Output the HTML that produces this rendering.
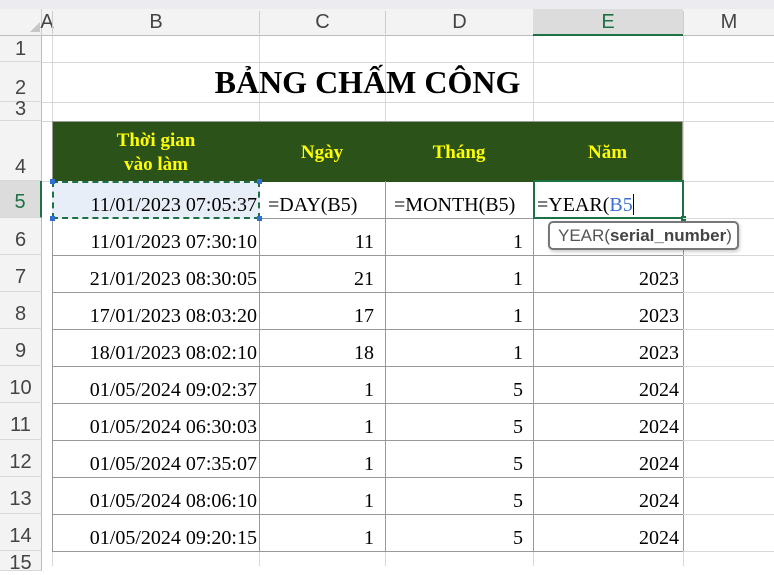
<!DOCTYPE html><html><head><style>
body{margin:0;width:774px;height:566px;overflow:hidden;background:#fff;position:relative;font-family:"Liberation Serif",serif}
div{position:absolute;box-sizing:border-box}
.h{font-family:"Liberation Sans",sans-serif;color:#444;font-size:20px;text-align:center}
.rh{left:0;width:42px;background:#f3f3f3;border-right:1px solid #bbb;border-bottom:1px solid #d8d8d8}
.vl{width:1px;background:#d8d8d8}
.hl{height:1px;background:#d8d8d8}
.t{font-size:20px;color:#000;white-space:nowrap}
.g{background:#2a5219;color:#ffff00;font-weight:bold;font-size:19px;text-align:center;border-right:1px solid #999}
</style></head><body>
<div style="left:0;top:0;width:774px;height:9px;background:#ecebf0"></div>
<div style="left:0;top:9px;width:774px;height:27px;background:#f3f3f3;border-bottom:1px solid #bbb"></div>
<div style="left:0;top:9px;width:42px;height:27px;border-right:1px solid #ccc"></div>
<div style="left:30px;top:22px;width:0;height:0;border-left:10px solid transparent;border-bottom:10px solid #c6c6c6"></div>
<div class="h" style="left:40px;top:11px;width:14px">A</div>
<div class="h" style="left:52px;top:11px;width:207px;border-left:1px solid #ccc">B</div>
<div class="h" style="left:259px;top:11px;width:126px;border-left:1px solid #ccc">C</div>
<div class="h" style="left:385px;top:11px;width:148px;border-left:1px solid #ccc">D</div>
<div style="left:533px;top:9px;width:150px;height:27px;background:#dcdcdc;border-bottom:2px solid #1e7145"></div>
<div class="h" style="left:533px;top:11px;width:150px;color:#1e7145">E</div>
<div class="h" style="left:683px;top:11px;width:91px;border-left:1px solid #ccc">M</div>
<div class="vl" style="left:52px;top:36px;height:530px"></div>
<div class="vl" style="left:259px;top:36px;height:530px"></div>
<div class="vl" style="left:385px;top:36px;height:530px"></div>
<div class="vl" style="left:533px;top:36px;height:530px"></div>
<div class="vl" style="left:683px;top:36px;height:530px"></div>
<div class="hl" style="left:42px;top:62px;width:732px"></div>
<div class="hl" style="left:42px;top:102px;width:732px"></div>
<div class="hl" style="left:42px;top:121px;width:732px"></div>
<div class="hl" style="left:42px;top:181px;width:732px"></div>
<div class="rh h" style="top:36px;height:26px;line-height:26px">1</div>
<div class="rh h" style="top:62px;height:40px;line-height:52px">2</div>
<div class="rh h" style="top:102px;height:19px;line-height:14px">3</div>
<div class="rh h" style="top:121px;height:60px;line-height:92px">4</div>
<div class="rh h" style="top:181px;height:37px;line-height:42px;background:#dcdcdc;color:#1e7145;border-right:2px solid #1e7145">5</div>
<div class="rh h" style="top:218px;height:37px;line-height:44px">6</div>
<div class="rh h" style="top:255px;height:37px;line-height:44px">7</div>
<div class="rh h" style="top:292px;height:37px;line-height:44px">8</div>
<div class="rh h" style="top:329px;height:37px;line-height:44px">9</div>
<div class="rh h" style="top:366px;height:37px;line-height:44px">10</div>
<div class="rh h" style="top:403px;height:37px;line-height:44px">11</div>
<div class="rh h" style="top:440px;height:37px;line-height:44px">12</div>
<div class="rh h" style="top:477px;height:37px;line-height:44px">13</div>
<div class="rh h" style="top:514px;height:37px;line-height:44px">14</div>
<div class="rh h" style="top:551px;height:20px;line-height:24px">15</div>
<div style="left:52px;top:64px;width:631px;text-align:center;font-weight:bold;font-size:32px;color:#000">BẢNG CHẤM CÔNG</div>
<div class="g" style="left:52px;top:121px;width:208px;height:61px;padding-top:7px;line-height:24px;border-left:1px solid #999;border-top:1px solid #999">Thời gian<br>vào làm</div>
<div class="g" style="left:259px;top:121px;width:127px;height:61px;line-height:62px;border-top:1px solid #999">Ngày</div>
<div class="g" style="left:385px;top:121px;width:149px;height:61px;line-height:62px;border-top:1px solid #999">Tháng</div>
<div class="g" style="left:533px;top:121px;width:150px;height:61px;line-height:62px;border-top:1px solid #999">Năm</div>
<div style="left:52px;top:181px;width:632px;height:371px;border:1px solid #999;border-top:none"></div>
<div style="left:259px;top:181px;width:1px;height:371px;background:#999"></div>
<div style="left:385px;top:181px;width:1px;height:371px;background:#999"></div>
<div style="left:533px;top:181px;width:1px;height:371px;background:#999"></div>
<div style="left:52px;top:218px;width:632px;height:1px;background:#999"></div>
<div style="left:52px;top:255px;width:632px;height:1px;background:#999"></div>
<div style="left:52px;top:292px;width:632px;height:1px;background:#999"></div>
<div style="left:52px;top:329px;width:632px;height:1px;background:#999"></div>
<div style="left:52px;top:366px;width:632px;height:1px;background:#999"></div>
<div style="left:52px;top:403px;width:632px;height:1px;background:#999"></div>
<div style="left:52px;top:440px;width:632px;height:1px;background:#999"></div>
<div style="left:52px;top:477px;width:632px;height:1px;background:#999"></div>
<div style="left:52px;top:514px;width:632px;height:1px;background:#999"></div>
<div style="left:52px;top:181px;width:208px;height:38px;background:#e8eef8;border:2px dashed #1e7145"></div>
<div style="left:50px;top:179px;width:5px;height:5px;background:#2f6fce"></div>
<div style="left:257px;top:179px;width:5px;height:5px;background:#2f6fce"></div>
<div style="left:50px;top:216px;width:5px;height:5px;background:#2f6fce"></div>
<div style="left:257px;top:216px;width:5px;height:5px;background:#2f6fce"></div>
<div class="t" style="left:52px;top:194px;width:205px;text-align:right">11/01/2023 07:05:37</div>
<div class="t" style="left:268px;top:194px">=DAY(B5)</div>
<div class="t" style="left:394px;top:194px">=MONTH(B5)</div>
<div style="left:533px;top:180px;width:151px;height:39px;border:2px solid #1e7145;background:#fff"></div>
<div style="left:681px;top:216px;width:5px;height:5px;background:#1e7145"></div>
<div class="t" style="left:537px;top:194px">=YEAR(<span style="color:#3b6fd0">B5</span><span style="display:inline-block;width:1px;height:21px;background:#000;vertical-align:-4px"></span></div>
<div style="left:548px;top:221px;width:191px;height:29px;border:2px solid #777;border-radius:5px;background:#fff;box-shadow:1px 2px 3px rgba(0,0,0,.2);font-family:'Liberation Sans',sans-serif;font-size:17px;color:#555;line-height:25px;padding-left:8px;white-space:nowrap">YEAR(<b style="color:#444">serial_number</b>)</div>
<div class="t" style="left:52px;top:231px;width:205px;text-align:right">11/01/2023 07:30:10</div>
<div class="t" style="left:259px;top:231px;width:115px;text-align:right">11</div>
<div class="t" style="left:385px;top:231px;width:138px;text-align:right">1</div>
<div class="t" style="left:52px;top:268px;width:205px;text-align:right">21/01/2023 08:30:05</div>
<div class="t" style="left:259px;top:268px;width:115px;text-align:right">21</div>
<div class="t" style="left:385px;top:268px;width:138px;text-align:right">1</div>
<div class="t" style="left:533px;top:268px;width:146px;text-align:right">2023</div>
<div class="t" style="left:52px;top:305px;width:205px;text-align:right">17/01/2023 08:03:20</div>
<div class="t" style="left:259px;top:305px;width:115px;text-align:right">17</div>
<div class="t" style="left:385px;top:305px;width:138px;text-align:right">1</div>
<div class="t" style="left:533px;top:305px;width:146px;text-align:right">2023</div>
<div class="t" style="left:52px;top:342px;width:205px;text-align:right">18/01/2023 08:02:10</div>
<div class="t" style="left:259px;top:342px;width:115px;text-align:right">18</div>
<div class="t" style="left:385px;top:342px;width:138px;text-align:right">1</div>
<div class="t" style="left:533px;top:342px;width:146px;text-align:right">2023</div>
<div class="t" style="left:52px;top:379px;width:205px;text-align:right">01/05/2024 09:02:37</div>
<div class="t" style="left:259px;top:379px;width:115px;text-align:right">1</div>
<div class="t" style="left:385px;top:379px;width:138px;text-align:right">5</div>
<div class="t" style="left:533px;top:379px;width:146px;text-align:right">2024</div>
<div class="t" style="left:52px;top:416px;width:205px;text-align:right">01/05/2024 06:30:03</div>
<div class="t" style="left:259px;top:416px;width:115px;text-align:right">1</div>
<div class="t" style="left:385px;top:416px;width:138px;text-align:right">5</div>
<div class="t" style="left:533px;top:416px;width:146px;text-align:right">2024</div>
<div class="t" style="left:52px;top:453px;width:205px;text-align:right">01/05/2024 07:35:07</div>
<div class="t" style="left:259px;top:453px;width:115px;text-align:right">1</div>
<div class="t" style="left:385px;top:453px;width:138px;text-align:right">5</div>
<div class="t" style="left:533px;top:453px;width:146px;text-align:right">2024</div>
<div class="t" style="left:52px;top:490px;width:205px;text-align:right">01/05/2024 08:06:10</div>
<div class="t" style="left:259px;top:490px;width:115px;text-align:right">1</div>
<div class="t" style="left:385px;top:490px;width:138px;text-align:right">5</div>
<div class="t" style="left:533px;top:490px;width:146px;text-align:right">2024</div>
<div class="t" style="left:52px;top:527px;width:205px;text-align:right">01/05/2024 09:20:15</div>
<div class="t" style="left:259px;top:527px;width:115px;text-align:right">1</div>
<div class="t" style="left:385px;top:527px;width:138px;text-align:right">5</div>
<div class="t" style="left:533px;top:527px;width:146px;text-align:right">2024</div>
<div class="hl" style="left:683px;top:218px;width:91px"></div>
<div class="hl" style="left:683px;top:255px;width:91px"></div>
<div class="hl" style="left:683px;top:292px;width:91px"></div>
<div class="hl" style="left:683px;top:329px;width:91px"></div>
<div class="hl" style="left:683px;top:366px;width:91px"></div>
<div class="hl" style="left:683px;top:403px;width:91px"></div>
<div class="hl" style="left:683px;top:440px;width:91px"></div>
<div class="hl" style="left:683px;top:477px;width:91px"></div>
<div class="hl" style="left:683px;top:514px;width:91px"></div>
<div class="hl" style="left:683px;top:551px;width:91px"></div>
</body></html>
